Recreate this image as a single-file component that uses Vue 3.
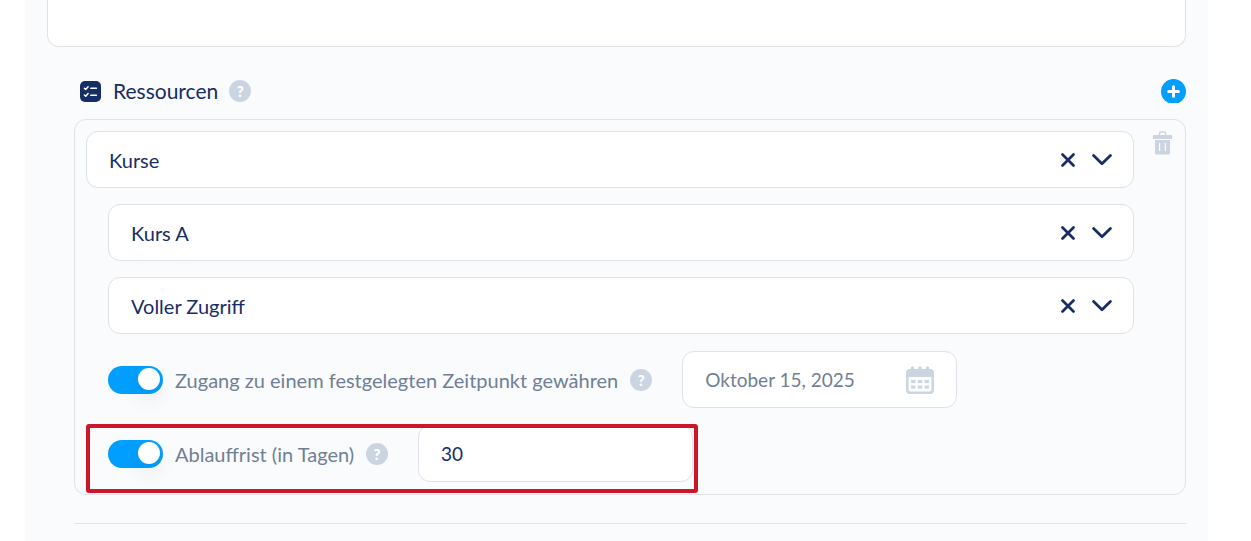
<template>
    <div class="page">
        <main class="panel">
            <textarea class="description" aria-label="Beschreibung"></textarea>

            <section class="resources">
                <div class="header">
                    <svg class="header-icon" viewBox="0 0 21 21" aria-hidden="true">
                        <rect width="21" height="21" rx="5" fill="#172d65" />
                        <g fill="none" stroke="#fff" stroke-width="1.5" stroke-linecap="round" stroke-linejoin="round">
                            <path d="M4.4 7.2l1.3 1.2 2.4-2.7M4.4 14l1.3 1.2 2.4-2.7" />
                            <path d="M10.8 7.3h5.6M10.8 14.3h5.6" />
                        </g>
                    </svg>
                    <h2 class="title">Ressourcen</h2>
                    <button class="help" type="button" aria-label="Hilfe">?</button>
                    <button class="icon-button add" type="button" aria-label="Hinzufügen">
                        <svg width="25" height="24" viewBox="0 0 25 24">
                            <circle cx="12.5" cy="12.5" r="12.5" fill="#009fff" />
                            <path d="M12.5 7.7v9.6M7.7 12.5h9.6" stroke="#fff" stroke-width="3" stroke-linecap="round" />
                        </svg>
                    </button>
                </div>

                <div class="card">
                    <div class="fields">
                        <div class="selects">
                            <div v-for="field in selects" :key="field.name" class="select-box" :class="{ nested: field.nested }">
                                <select v-model="field.value" class="select" :aria-label="field.name">
                                    <option value=""></option>
                                    <option v-for="option in field.options" :key="option" :value="option">{{ option }}</option>
                                </select>
                                <button class="icon-button" type="button" aria-label="Auswahl löschen" @click="field.value = ''">
                                    <svg width="14" height="14" viewBox="0 0 14 14">
                                        <path d="M1.5 1.5l11 11M12.5 1.5l-11 11" stroke="#172d65" stroke-width="2.7" stroke-linecap="round" />
                                    </svg>
                                </button>
                                <svg class="chevron" width="20" height="12" viewBox="0 0 20 12" aria-hidden="true">
                                    <path d="M1.6 1.6l8.4 8.2 8.400-8.200" fill="none" stroke="#172d65" stroke-width="2.8" stroke-linecap="round" stroke-linejoin="round" />
                                </svg>
                            </div>
                        </div>

                        <div class="row">
                            <input id="access" v-model="hasAccessDate" class="toggle" type="checkbox" role="switch">
                            <label class="label" for="access">Zugang zu einem festgelegten Zeitpunkt gewähren</label>
                            <button class="help" type="button" aria-label="Hilfe">?</button>
                            <div class="input-box">
                                <input v-model="accessDate" class="input date" type="text" aria-label="Datum">
                                <svg width="28" height="28" viewBox="0 0 28 28" aria-hidden="true">
                                    <path d="M4 3h20a4 4 0 0 1 4 4v17a4 4 0 0 1-4 4H4a4 4 0 0 1-4-4V7a4 4 0 0 1 4-4zM2.500 11v12.500a2 2 0 0 0 2 2h19a2 2 0 0 0 2-2V11z" fill="#cbd5e2" fill-rule="evenodd" />
                                    <path d="M6.500 2v4M14 2v4M21.500 2v4" stroke="#cbd5e2" stroke-width="3.500" stroke-linecap="round" />
                                    <path d="M5 15.500h18M5 21h18" stroke="#cbd5e2" stroke-width="3" stroke-dasharray="4.500 2.250" />
                                </svg>
                            </div>
                        </div>

                        <div class="row highlighted">
                            <input id="expiry" v-model="hasExpiry" class="toggle" type="checkbox" role="switch">
                            <label class="label" for="expiry">Ablauffrist (in Tagen)</label>
                            <button class="help" type="button" aria-label="Hilfe">?</button>
                            <div class="input-box">
                                <input v-model="expiryDays" class="input" type="text" inputmode="numeric" aria-label="Tage">
                            </div>
                        </div>
                    </div>

                    <button class="icon-button" type="button" aria-label="Löschen">
                        <svg width="19" height="24" viewBox="0 0 19 24">
                            <path d="M6.500 4V2.200a1.200 1.200 0 0 1 1.200-1.200h3.600a1.200 1.200 0 0 1 1.200 1.200V4" fill="none" stroke="#cbd5e2" stroke-width="1.500" />
                            <rect y="4" width="19" height="4" rx="0.500" fill="#cbd5e2" />
                            <path d="M2 9h15v13.500a1 1 0 0 1-1 1H3a1 1 0 0 1-1-1zM6 12v8h1.200v-8zM11.800 12v8H13v-8z" fill="#cbd5e2" fill-rule="evenodd" />
                        </svg>
                    </button>
                </div>

                <hr class="divider">
            </section>
        </main>
    </div>
</template>

<script setup>
import { ref } from 'vue';

const selects = ref([
    { name: 'Ressource', value: 'Kurse', options: ['Kurse'], nested: false },
    { name: 'Kurs', value: 'Kurs A', options: ['Kurs A'], nested: true },
    { name: 'Zugriff', value: 'Voller Zugriff', options: ['Voller Zugriff'], nested: true }
])

const hasAccessDate = ref(true)
const accessDate = ref('Oktober 15, 2025')
const hasExpiry = ref(true)
const expiryDays = ref('30')
</script>

<style>
body {
    margin: 0;
    background: #fff;
}
</style>

<style scoped>
.page,
.page * {
    box-sizing: border-box;
}

.page {
    padding: 0 43px 0 25px;
    font-family: Lato, "Liberation Sans", sans-serif;
    font-size: 20px;
    line-height: 24px;
    color: #172d65;
}

.panel {
    min-height: 100vh;
    padding: 0 22px;
    background: #fafbfd;
}

.description {
    display: block;
    width: 100%;
    height: 47px;
    border: 1px solid #dfe2e6;
    border-top: 0;
    border-radius: 0 0 12px 12px;
    background: #fff;
    resize: none;
}

.resources {
    margin-left: 27px;
}

.header {
    display: flex;
    align-items: center;
    height: 24px;
    margin: 32px 0 16px;
    padding-left: 6px;
}

.header-icon {
    width: 21px;
    height: 21px;
    margin-right: 12px;
}

.title {
    margin: 0 11px 0 0;
    font-size: 21px;
    font-weight: 400;
}

.help {
    flex: none;
    width: 22px;
    height: 22px;
    padding: 0;
    border: 0;
    border-radius: 50%;
    background: #cbd5e2;
    color: #fff;
    font: 900 15px/22px Lato, sans-serif;
    text-align: center;
}

.icon-button {
    flex: none;
    padding: 0;
    border: 0;
    background: none;
    cursor: pointer;
}

.icon-button svg {
    display: block;
}

.add {
    margin-left: auto;
}

.card {
    display: flex;
    align-items: flex-start;
    gap: 19px;
    padding: 11px 13px 12px 11px;
    border: 1px solid #dfe2e6;
    border-radius: 12px;
}

.fields {
    display: flex;
    flex: 1;
    flex-direction: column;
    align-items: flex-start;
    gap: 17px;
    min-width: 0;
}

.selects {
    display: flex;
    flex-direction: column;
    align-self: stretch;
    gap: 16px;
}

.select-box,
.input-box {
    display: flex;
    align-items: center;
    height: 57px;
    padding: 0 22px;
    border: 1px solid #dfe2e6;
    border-radius: 12px;
    background: #fff;
}

.select-box {
    padding-right: 21px;
}

.select-box.nested,
.row {
    margin-left: 22px;
}

.select,
.input {
    flex: 1;
    min-width: 0;
    height: 100%;
    padding: 0;
    border: 0;
    outline: 0;
    appearance: none;
    background: none;
    color: inherit;
    font: inherit;
}

.input {
    font-size: 19px;
}

.chevron {
    margin-left: 17px;
    pointer-events: none;
}

.row {
    position: relative;
    display: flex;
    align-items: center;
}

.toggle {
    flex: none;
    width: 55px;
    height: 28px;
    margin: 0 12px 0 0;
    padding: 2px 3px;
    border-radius: 14px;
    appearance: none;
    background: #cbd5e2;
    cursor: pointer;
}

.toggle::before {
    content: "";
    display: block;
    width: 22px;
    height: 22px;
    border-radius: 50%;
    background: #fff;
    box-shadow: 0 10px 20px rgba(0, 0, 0, 0.08);
}

.toggle:checked {
    background: #009fff;
}

.toggle:checked::before {
    margin-left: auto;
}

.label {
    margin-right: 12px;
    color: #6f8096;
}

.input-box {
    width: 275px;
    margin-left: 30px;
}

.date {
    color: #6f8096;
}

.highlighted::after {
    content: "";
    position: absolute;
    inset: -1px -5px -11px -22px;
    border: 4px solid #cc172b;
    border-radius: 3px;
    pointer-events: none;
}

.divider {
    height: 1px;
    margin: 28px 0 0;
    border: 0;
    background: #dfe2e6;
}
</style>
